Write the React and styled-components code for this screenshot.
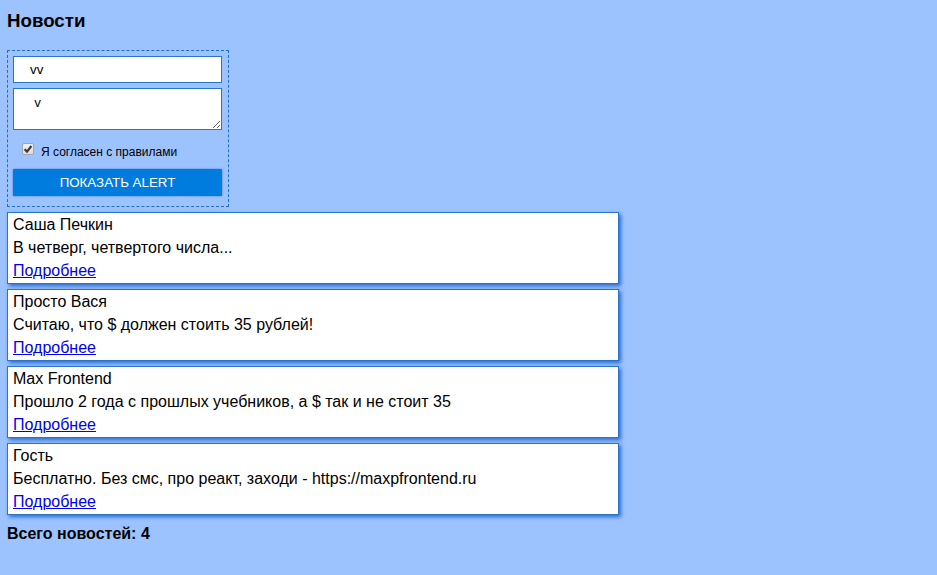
import React, { useState } from 'react';
import styled, { createGlobalStyle } from 'styled-components';

const GlobalStyle = createGlobalStyle`
  *, *::before, *::after { box-sizing: border-box; }
  body {
    margin: 0;
    min-height: 100vh;
    background: #9dc3ff;
    color: #000;
    font: 16px/23px "Liberation Sans", Arial, sans-serif;
  }
`;

const Page = styled.main`
  padding: 8px 7px;
`;

const Title = styled.h3`
  margin: 0 0 17px;
  line-height: 25px;
`;

const Form = styled.form`
  display: flex;
  flex-direction: column;
  gap: 5px;
  width: 222px;
  max-width: 100%;
  padding: 5px 5px 10px;
  border: 1px dashed #1f6fc6;
`;

const AuthorInput = styled.input`
  height: 27px;
  min-width: 0;
  margin-right: 1px;
  padding: 0 16px;
  border: 1px solid #2a75c9;
  border-radius: 0;
  background: #fff;
  color: #000;
  font-family: "Liberation Sans", Arial, sans-serif;
  outline: none;
`;

const NewsText = styled.textarea`
  height: 42px;
  margin-right: 1px;
  padding: 7px 20px;
  border: 1px solid #2a75c9;
  border-radius: 0;
  background: #fff;
  color: #000;
  font: 12px/16px "Liberation Mono", monospace;
  outline: none;
  overflow: hidden;
  resize: vertical;
`;

const Agreement = styled.label`
  display: flex;
  align-items: center;
  gap: 7px;
  height: 29px;
  padding: 4px 9px 0;
  font-size: 12px;
  line-height: 16px;
`;

const CheckHolder = styled.span`
  display: grid;
  margin-bottom: 5px;
  > * { grid-area: 1 / 1; }
`;

const Checkbox = styled.input`
  appearance: none;
  width: 12px;
  height: 12px;
  margin: 0;
  border: 1px solid #a6a6a6;
  border-radius: 2px;
  background: linear-gradient(#f0f0f0, #dedede);
  &:not(:checked) + svg { visibility: hidden; }
`;

const Tick = styled.svg`
  width: 12px;
  height: 12px;
  pointer-events: none;
`;

const AlertButton = styled.button`
  height: 27px;
  margin-right: 1px;
  padding: 0;
  border: 0;
  border-radius: 1px;
  background: #007bde;
  box-shadow: 0 0 2px #2b72e0;
  color: #fff;
  font-family: "Liberation Sans", Arial, sans-serif;
  text-transform: uppercase;
`;

const NewsList = styled.section`
  display: flex;
  flex-direction: column;
  gap: 5px;
  max-width: 612px;
  margin: 5px 0 7px;
`;

const NewsCard = styled.article`
  padding: 0 5px 1px;
  border: 1px solid #2a75c9;
  background: #fff;
  box-shadow: 2px 2px 4px #2469cf;
`;

const NewsLine = styled.p`
  margin: 0;
`;

const MoreLink = styled.a`
  color: #0000ee;
`;

const Total = styled.strong`
  display: block;
`;

const news = [
  { author: 'Саша Печкин', text: 'В четверг, четвертого числа...' },
  { author: 'Просто Вася', text: 'Считаю, что $ должен стоить 35 рублей!' },
  { author: 'Max Frontend', text: 'Прошло 2 года с прошлых учебников, а $ так и не стоит 35' },
  { author: 'Гость', text: 'Бесплатно. Без смс, про реакт, заходи - https://maxpfrontend.ru' },
];

export default function App() {
  const [agree, setAgree] = useState(true);
  const [author, setAuthor] = useState('vv');
  const [text, setText] = useState('v');

  const showAlert = (event) => {
    event.preventDefault();
    window.alert(`${author}\n${text}`);
  };

  return (
    <>
      <GlobalStyle />
      <Page>
        <Title>Новости</Title>
        <Form onSubmit={showAlert}>
          <AuthorInput
            aria-label="Имя"
            value={author}
            onChange={(e) => setAuthor(e.target.value)}
          />
          <NewsText
            aria-label="Текст новости"
            value={text}
            onChange={(e) => setText(e.target.value)}
          />
          <Agreement htmlFor="agree">
            <CheckHolder>
              <Checkbox
                id="agree"
                type="checkbox"
                checked={agree}
                onChange={(e) => setAgree(e.target.checked)}
              />
              <Tick viewBox="0 0 12 12" aria-hidden="true">
                <path d="M2.6 6.2 5 8.6 9.4 3" fill="none" stroke="#3c3c3c" strokeWidth="2.2" />
              </Tick>
            </CheckHolder>
            Я согласен с правилами
          </Agreement>
          <AlertButton type="submit" disabled={!agree}>Показать alert</AlertButton>
        </Form>
        <NewsList>
          {news.map((item) => (
            <NewsCard key={item.author}>
              <NewsLine>{item.author}</NewsLine>
              <NewsLine>{item.text}</NewsLine>
              <MoreLink href="#more">Подробнее</MoreLink>
            </NewsCard>
          ))}
        </NewsList>
        <Total>Всего новостей: {news.length}</Total>
      </Page>
    </>
  );
}
